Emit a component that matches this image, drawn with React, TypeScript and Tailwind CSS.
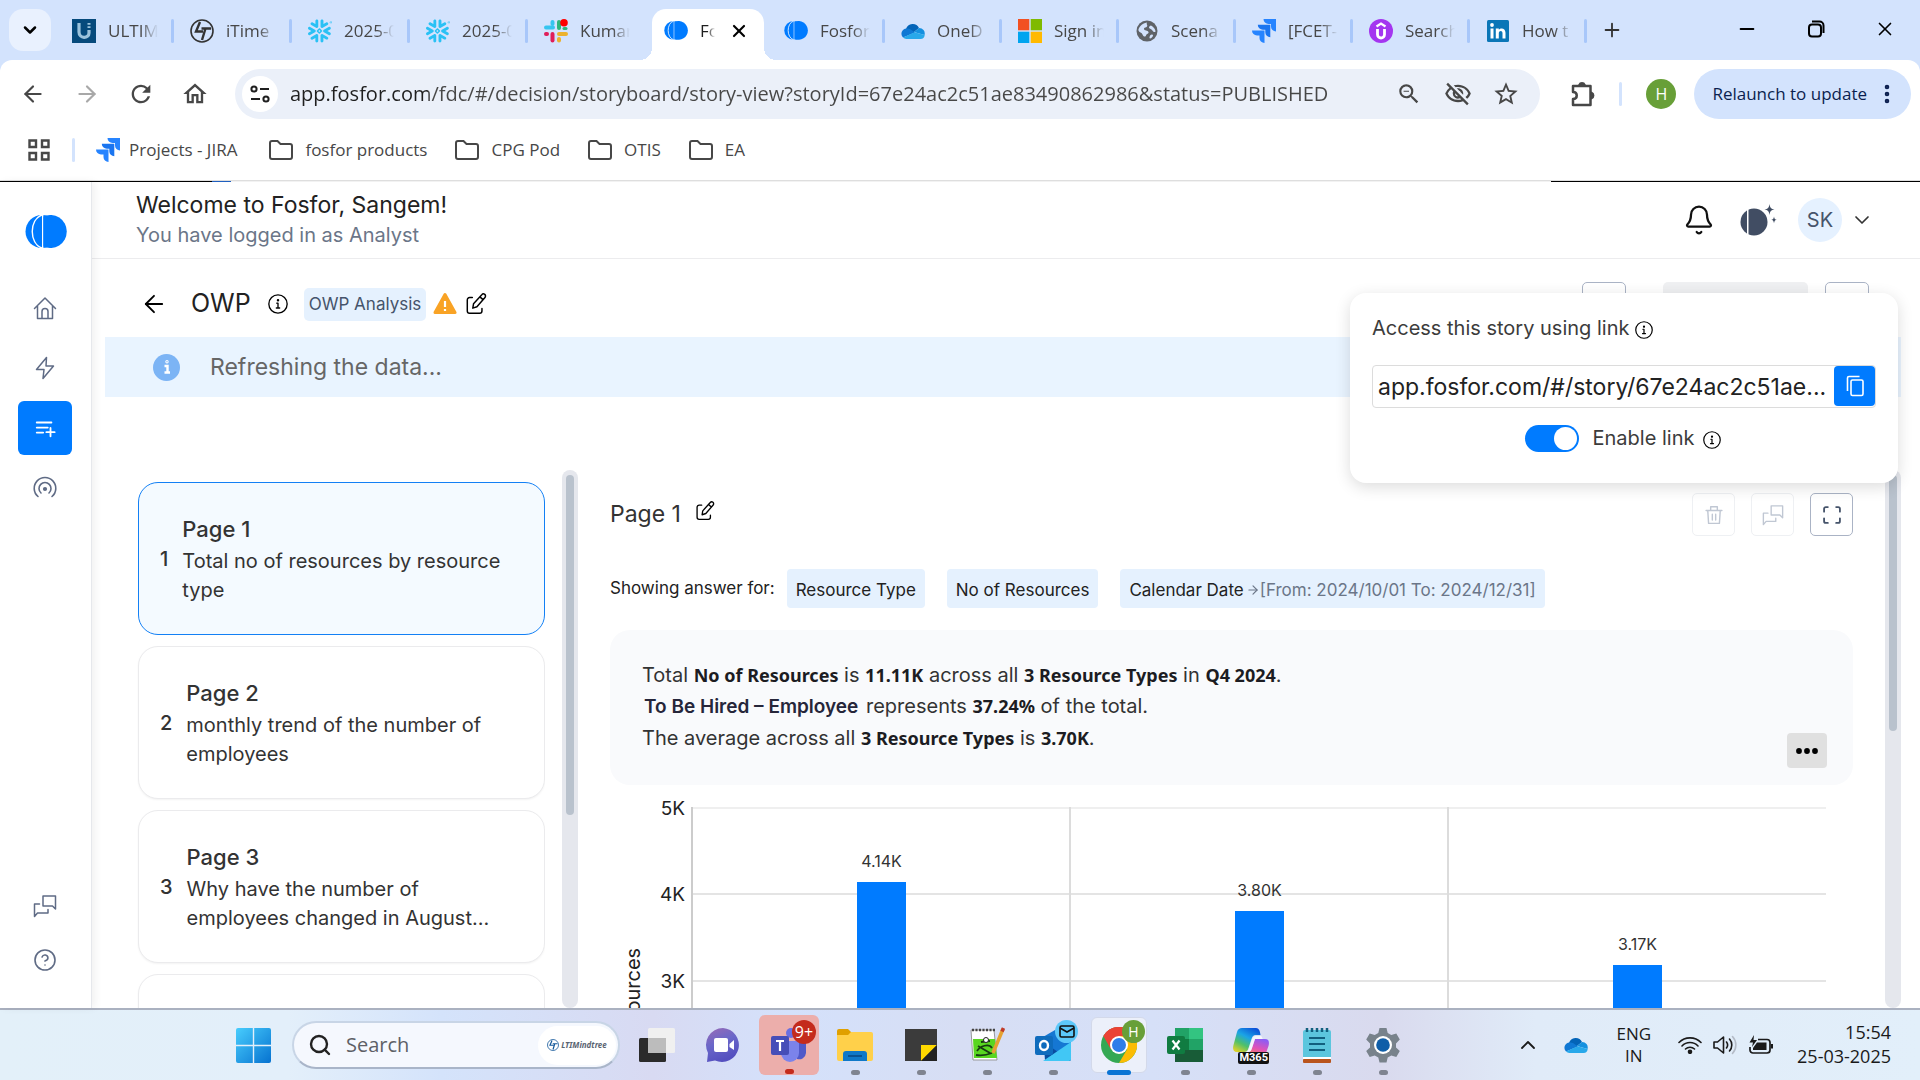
import React from "react";
import {
  ArrowLeft,
  ArrowRight,
  Bell,
  ChevronDown,
  ChevronUp,
  CircleHelp,
  Minus,
  MoreVertical,
  Plus,
  Search,
  X,
} from "lucide-react";
import {
  MdOutlineHome,
  MdOutlineStarBorder,
  MdOutlineVisibilityOff,
  MdOutlineZoomOut,
  MdRefresh,
} from "react-icons/md";
import { SiSnowflake } from "react-icons/si";

type IconProps = { className?: string };

/* ---------- brand icons ---------- */

const FosforLogo = ({ className }: IconProps) => (
  <svg viewBox="0 0 42 33" className={className}>
    <ellipse cx="17" cy="16.500" rx="16.500" ry="16.500" fill="#007bff" />
    <path d="M17 0C4 4 4 29 17 33" fill="none" stroke="#fff" strokeWidth="1.400" />
    <rect x="17" y="0" width="1.400" height="33" fill="#fff" />
    <path d="M18.400 1.500a16.500 16.500 0 1 1 0 30z" fill="#007bff" />
  </svg>
);

const JiraIcon = ({ className }: IconProps) => (
  <svg viewBox="0 0 24 24" className={className}>
    <path d="M11.500 0H24v12.500a5 5 0 0 1-5-5V5h-2.500a5 5 0 0 1-5-5z" fill="#2684ff" />
    <path d="M5.800 5.800h12.500v12.500a5 5 0 0 1-5-5v-2.500h-2.500a5 5 0 0 1-5-5z" fill="#1a75f0" />
    <path d="M0 11.500h12.500V24a5 5 0 0 1-5-5v-2.500H5a5 5 0 0 1-5-5z" fill="#2684ff" />
  </svg>
);

const UltimIcon = () => (
  <svg viewBox="0 0 24 24" className="size-6">
    <rect width="24" height="24" fill="#064a7c" />
    <path d="M7 4v9c0 7 10 7 10 1v-3" fill="none" stroke="#9cc3dc" strokeWidth="3.200" />
    <path d="M15.500 4h3v1.800h-3zM15.500 7.300h3v1.800h-3z" fill="#9cc3dc" />
  </svg>
);

const LtIcon = ({ className, color = "#333" }: IconProps & { color?: string }) => (
  <svg viewBox="0 0 24 24" className={className} fill="none" stroke={color}>
    <circle cx="12" cy="12" r="11" strokeWidth="1.600" />
    <path d="M10 3 6 12.500h7M21 9.500h-9.500M15.500 9.500 12 21" strokeWidth="2.400" />
  </svg>
);

const SlackIcon = () => (
  <svg viewBox="0 0 24 24" className="size-6">
    <rect x="0" y="6.500" width="11" height="4" rx="2" fill="#36c5f0" />
    <rect x="6.500" y="1" width="4" height="6" rx="2" fill="#36c5f0" />
    <rect x="13" y="1" width="4" height="10" rx="2" fill="#2eb67d" />
    <rect x="18.500" y="8" width="5" height="3" rx="1.500" fill="#2eb67d" />
    <rect x="13" y="13" width="11" height="4" rx="2" fill="#ecb22e" />
    <rect x="13" y="18" width="4" height="5.500" rx="2" fill="#ecb22e" />
    <rect x="6.500" y="13" width="4" height="10.500" rx="2" fill="#e01e5a" />
    <rect x="0" y="13" width="5" height="4" rx="2" fill="#e01e5a" />
    <circle cx="20" cy="3.800" r="3.800" fill="#ff0000" />
  </svg>
);

const OneDriveIcon = () => (
  <svg viewBox="0 0 24 16" className="w-6">
    <path d="M5 6a7 7 0 0 1 13-1l-5 4-8 2z" fill="#0364b8" />
    <path d="M5.500 5.500A5.300 5.300 0 0 0 2 14.500L14 9.500 9 6a6 6 0 0 0-3.500-.5z" fill="#0f78d4" />
    <path d="M13 9l5-4a5.500 5.500 0 0 1 5.500 7z" fill="#1490df" />
    <path d="M2 14.500 13.500 9.300 23.700 12A4.500 4.500 0 0 1 19.500 16H5.300A5 5 0 0 1 2 14.500z" fill="#28a8ea" />
  </svg>
);

const MicrosoftIcon = () => (
  <svg viewBox="0 0 24 24" className="size-6">
    <path d="M0 0h11.300v11.300H0z" fill="#f25022" />
    <path d="M12.700 0H24v11.300H12.700z" fill="#7fba00" />
    <path d="M0 12.700h11.300V24H0z" fill="#00a4ef" />
    <path d="M12.700 12.700H24V24H12.700z" fill="#ffb900" />
  </svg>
);

const GlobeIcon = () => (
  <svg viewBox="0 0 24 24" className="size-6">
    <circle cx="12" cy="12" r="10.500" fill="#5f6368" />
    <path d="M12 3.500c-1 2 1 2.500 0 4s-3 .5-3 2.500 4 1 4.500 3-2 1.500-2.500 3.500-3 1-3.500-1S4 13.500 3.500 11.500 6.500 4 12 3.500z" fill="#d3e3fd" />
    <path d="M16 6.500c2 1 4.500 3.500 4.500 6-1 1.500-2.500 0-3.500-1.500s-3-1-3-2.500 1-1.500 2-2zM15.500 16c1-1 2.500-.5 2.500.5s-2 3-3 3-.5-2.500.5-3.500z" fill="#d3e3fd" />
  </svg>
);

const UdemyIcon = () => (
  <svg viewBox="0 0 24 24" className="size-6">
    <circle cx="12" cy="12" r="12" fill="#a435f0" />
    <path d="M7.500 7.500 12 4.500l4.500 3" fill="none" stroke="#fff" strokeWidth="2.200" />
    <path d="M8.500 10v5.500a3.500 3.500 0 0 0 7 0V10" fill="none" stroke="#fff" strokeWidth="2.800" />
  </svg>
);

const LinkedInIcon = () => (
  <svg viewBox="0 0 24 24" className="size-6">
    <rect x="1" y="1" width="22" height="22" rx="1.500" fill="#0a76b7" />
    <rect x="4.500" y="9.500" width="3" height="10" fill="#fff" />
    <circle cx="6" cy="6" r="1.900" fill="#fff" />
    <path d="M9.800 9.500h3v1.300c2-2.500 6.700-1.700 6.700 3v5.700h-3v-5.300c0-3.200-3.700-2.800-3.700 0v5.300h-3z" fill="#fff" />
  </svg>
);

/* ---------- line icons ---------- */

const Line = ({ className, children, w = 1.5 }: IconProps & { children: React.ReactNode; w?: number }) => (
  <svg viewBox="0 0 24 24" className={className} fill="none" stroke="currentColor" strokeWidth={w} strokeLinecap="round" strokeLinejoin="round">
    {children}
  </svg>
);

const InfoIcon = ({ className }: IconProps) => (
  <Line className={className} w={1.6}>
    <circle cx="12" cy="12" r="11" />
    <path d="M10.500 11H12v5.500M10 16.800h4" />
    <circle cx="12" cy="7.500" r=".7" fill="currentColor" />
  </Line>
);

const EditIcon = ({ className }: IconProps) => (
  <Line className={className} w={1.6}>
    <path d="M8 5H5A2.500 2.500 0 0 0 2.500 7.500v12A2.500 2.500 0 0 0 5 22h11a2.500 2.500 0 0 0 2.500-2.500V17" />
    <path d="M8.500 16.500 9.300 11.800 18.300 1.800a2.300 2.300 0 0 1 3.500 3L13 15z M16.300 4.200l3.300 3" />
  </Line>
);

const ChatsIcon = ({ className }: IconProps) => (
  <Line className={className}>
    <path d="M10 2h12.500v13l-3-3H10z" />
    <path d="M6.500 10H1.500v12.500l3-3.500H15v-3.500" />
  </Line>
);

const HouseIcon = ({ className }: IconProps) => (
  <Line className={className}>
    <path d="M1.500 12.500 12 2l10.500 10.500M4.500 10v12.500h15V10" />
    <path d="M9 22v-6.500a3 3 0 0 1 6 0V22" />
  </Line>
);

const BoltIcon = ({ className }: IconProps) => (
  <Line className={className}>
    <path d="M13.500 1.500 3.500 13.500H11L10 22.500 20.500 10H13z" />
  </Line>
);

const BroadcastIcon = ({ className }: IconProps) => (
  <Line className={className} w={1.6}>
    <path d="M5 20.500a10.800 10.800 0 1 1 14 0" />
    <path d="M8 17a6 6 0 1 1 8 0" />
    <circle cx="12" cy="13" r="1.300" fill="currentColor" />
  </Line>
);

const StoryIcon = ({ className }: IconProps) => (
  <Line className={className} w={2}>
    <path d="M3 6h16M3 11.500h12M3 17h7M18 12v9M13.500 16.500h9" />
  </Line>
);

const TrashIcon = ({ className }: IconProps) => (
  <Line className={className} w={1.7}>
    <path d="M2.500 6.500h19M8 6V2h8v4M4.500 6.500l1 15.500h13l1-15.500M10 11v7M14 11v7" />
  </Line>
);

const FullscreenIcon = ({ className }: IconProps) => (
  <Line className={className} w={2.2}>
    <path d="M2.500 8V4.500a2 2 0 0 1 2-2H7M17 2.500h2.500a2 2 0 0 1 2 2V8M21.500 16v3.500a2 2 0 0 1-2 2H17M7 21.500H4.500a2 2 0 0 1-2-2V16" />
  </Line>
);

const FolderIcon = () => (
  <svg viewBox="0 0 24 20" className="w-6" fill="none" stroke="#474747" strokeWidth="2">
    <path d="M1 3a2 2 0 0 1 2-2h5.500l3 3H21a2 2 0 0 1 2 2v11a2 2 0 0 1-2 2H3a2 2 0 0 1-2-2z" />
  </svg>
);

/* ---------- browser chrome ---------- */

const tabs = [
  { label: "ULTIM", width: "w-[118px]", icon: <UltimIcon /> },
  { label: "iTime", width: "w-[118px]", icon: <LtIcon className="size-6" /> },
  { label: "2025-0", width: "w-[118px]", icon: <SiSnowflake className="size-6 text-[#29c1f5]" /> },
  { label: "2025-0", width: "w-[118px]", icon: <SiSnowflake className="size-6 text-[#29c1f5]" /> },
  { label: "Kumar", width: "w-[118px]", icon: <SlackIcon /> },
  { label: "Fo", width: "w-[122px]", icon: <FosforLogo className="w-6" />, active: true },
  { label: "Fosfor", width: "w-[117px]", icon: <FosforLogo className="w-6" /> },
  { label: "OneD", width: "w-[117px]", icon: <OneDriveIcon /> },
  { label: "Sign in", width: "w-[117px]", icon: <MicrosoftIcon /> },
  { label: "Scena", width: "w-[117px]", icon: <GlobeIcon /> },
  { label: "[FCET-", width: "w-[117px]", icon: <JiraIcon className="size-6" /> },
  { label: "Search", width: "w-[117px]", icon: <UdemyIcon /> },
  { label: "How t", width: "w-[117px]", icon: <LinkedInIcon /> },
];

function TabStrip() {
  return (
    <div className="flex h-[60px] shrink-0 items-end bg-[#d3e3fd]">
      <button aria-label="Search tabs" className="mb-[9px] ml-[9px] mr-[5px] grid h-[42px] w-[42px] shrink-0 place-items-center rounded-[14px] bg-[#e9f1fe]">
        <ChevronDown className="size-5" strokeWidth={3} />
      </button>
      {tabs.map((t, i) =>
        t.active ? (
          <div key={i} className={`${t.width} relative flex h-[51px] shrink pl-[6px] pr-1`}>
            <span className="absolute bottom-0 left-[-6px] size-3 bg-[radial-gradient(circle_at_0_0,transparent_12px,white_12px)]" />
            <span className="absolute bottom-0 right-[-8px] size-3 bg-[radial-gradient(circle_at_100%_0,transparent_12px,white_12px)]" />
            <div className="flex flex-1 items-center rounded-t-[14px] bg-white pb-2 pl-3">
              {t.icon}
              <span className="ml-3 w-[15px] overflow-hidden whitespace-nowrap text-[17px] text-[#1f1f1f] [mask-image:linear-gradient(to_right,black_50%,transparent)]">
                {t.label}
              </span>
              <button aria-label="Close tab" className="ml-[14px]">
                <X className="size-5" strokeWidth={2.6} />
              </button>
            </div>
          </div>
        ) : (
          <div key={i} className={`${t.width} flex h-[51px] shrink items-center pb-2 pl-4`}>
            <span className="shrink-0">{t.icon}</span>
            <span className="ml-3 w-[50px] overflow-hidden whitespace-nowrap text-[17px] text-[#474747] [mask-image:linear-gradient(to_right,black_65%,transparent)]">
              {t.label}
            </span>
            {i !== 4 && <span className="ml-auto h-6 w-[3px] shrink-0 rounded-sm bg-[#a8c7fa]" />}
          </div>
        )
      )}
      <button aria-label="New tab" className="mb-[19px] ml-[14px]">
        <Plus className="size-[22px] text-[#333]" />
      </button>
      <div className="mb-5 ml-auto mr-6 flex shrink-0 gap-[47px]">
        <button aria-label="Minimize"><Minus className="size-[22px]" /></button>
        <button aria-label="Restore">
          <svg viewBox="0 0 22 22" className="size-[22px]" fill="none" stroke="#000" strokeWidth="2">
            <rect x="4" y="6.500" width="12" height="12" rx="3" />
            <path d="M7 3.500h7.500a4 4 0 0 1 4 4V15" />
          </svg>
        </button>
        <button aria-label="Close"><X className="size-[22px]" strokeWidth={1.8} /></button>
      </div>
    </div>
  );
}

function Toolbar() {
  return (
    <div className="shrink-0 bg-[#d3e3fd]">
      <div className="rounded-t-xl bg-white pt-[9px]">
        <div className="flex h-[50px] items-center pl-5 pr-[9px] text-[#474747]">
          <button aria-label="Back"><ArrowLeft className="size-[26px]" /></button>
          <button aria-label="Forward" className="ml-7"><ArrowRight className="size-[26px] text-[#a8a8a8]" /></button>
          <button aria-label="Reload" className="ml-[27px]"><MdRefresh className="size-7" /></button>
          <button aria-label="Home" className="ml-[26px]"><MdOutlineHome className="size-7" /></button>
          <div className="ml-[26px] flex h-full flex-1 items-center rounded-full bg-[#ebf0f9] pl-[7px] pr-5">
            <button aria-label="Site information" className="grid size-9 place-items-center rounded-full bg-white">
              <svg viewBox="0 0 20 20" className="size-5" fill="none" stroke="#1f1f1f" strokeWidth="2">
                <circle cx="4" cy="5" r="2.600" />
                <path d="M10 5h9M1 15h9" />
                <circle cx="16" cy="15" r="2.600" />
              </svg>
            </button>
            <input
              aria-label="Address"
              readOnly
              value="app.fosfor.com/fdc/#/decision/storyboard/story-view?storyId=67e24ac2c51ae83490862986&status=PUBLISHED"
              className="ml-3 min-w-0 flex-1 bg-[linear-gradient(to_right,#1f1f1f_138px,#474747_138px)] bg-clip-text text-xl text-transparent outline-none"
            />
            <button aria-label="Zoom"><MdOutlineZoomOut className="size-[26px]" /></button>
            <button aria-label="Third-party cookies blocked" className="ml-[22px]"><MdOutlineVisibilityOff className="size-7" /></button>
            <button aria-label="Bookmark" className="ml-5"><MdOutlineStarBorder className="size-7" /></button>
          </div>
          <button aria-label="Extensions" className="ml-7">
            <svg viewBox="0 0 28 28" className="size-7" fill="none" stroke="#474747" strokeWidth="2.500">
              <path d="M5 6h17.500v19H5v-6c5 0 5-7 0-7z" strokeLinejoin="round" />
              <path d="M11.500 5a2.700 2.700 0 0 1 5 0zM23.500 13a2.700 2.700 0 0 1 0 5z" fill="#474747" />
            </svg>
          </button>
          <span className="ml-[23px] h-6 w-[3px] rounded bg-[#d3e3fd]" />
          <button aria-label="Profile" className="ml-6 grid size-[30px] place-items-center rounded-full bg-[#689f38] text-base text-white">H</button>
          <button className="ml-[18px] flex h-full items-center whitespace-nowrap rounded-full bg-[#d3e3fd] pl-[18px] pr-3 text-[17px] text-[#0b1f4f]">
            Relaunch to update
            <MoreVertical className="ml-2 size-6" strokeWidth={2.6} />
          </button>
        </div>
        <nav className="flex h-[61px] items-center pl-7 text-[17px] text-[#474747]">
          <button aria-label="Apps">
            <svg viewBox="0 0 22 22" className="size-[22px]" fill="none" stroke="#474747" strokeWidth="2.400">
              <path d="M1.500 1.500h6.500v6.500H1.500zM14 1.500h6.500v6.500H14zM1.500 14h6.500v6.500H1.500zM14 14h6.500v6.500H14z" />
            </svg>
          </button>
          <span className="ml-[22px] mr-[21px] h-6 w-[3px] rounded bg-[#d3e3fd]" />
          <a href="#jira" className="mr-1 flex items-center gap-[9px]"><JiraIcon className="size-6" />Projects - JIRA</a>
          {["fosfor products", "CPG Pod", "OTIS", "EA"].map((f) => (
            <a key={f} href="#folder" className="ml-[28px] flex items-center gap-3"><FolderIcon />{f}</a>
          ))}
        </nav>
      </div>
    </div>
  );
}

/* ---------- application ---------- */

function Sidebar() {
  return (
    <aside className="z-10 flex w-[92px] shrink-0 flex-col items-center border-r border-[#e6e8ec] bg-white pb-[21px] pr-px pt-[33px] text-[#5f6b85] shadow-[3px_0_8px_rgba(0,0,0,0.06)]">
      <a href="#home" aria-label="Fosfor" className="ml-[2px]"><FosforLogo className="w-[42px]" /></a>
      <nav className="mt-[33px] flex flex-col gap-[6px]">
        <button aria-label="Home" className="grid size-[54px] place-items-center"><HouseIcon className="size-6" /></button>
        <button aria-label="Insights" className="grid size-[54px] place-items-center"><BoltIcon className="size-6" /></button>
        <button aria-label="Stories" className="grid size-[54px] place-items-center rounded-md bg-[#007bff] text-white"><StoryIcon className="size-[22px]" /></button>
        <button aria-label="Broadcast" className="grid size-[54px] place-items-center"><BroadcastIcon className="size-6" /></button>
      </nav>
      <button aria-label="Chats" className="mt-auto grid size-[54px] place-items-center"><ChatsIcon className="size-6" /></button>
      <button aria-label="Help" className="grid size-[54px] place-items-center"><CircleHelp className="size-6" strokeWidth={1.6} /></button>
    </aside>
  );
}

function Header() {
  return (
    <header className="flex h-[77px] shrink-0 items-center border-b border-[#ececee] pl-11 pr-[46px]">
      <div>
        <h1 className="text-[23px] leading-[30px] text-[#222]">Welcome to Fosfor, Sangem!</h1>
        <p className="text-[20px] leading-[30px] text-[#6b7688]">You have logged in as Analyst</p>
      </div>
      <button aria-label="Notifications" className="ml-auto"><Bell className="size-8 text-[#111]" strokeWidth={1.7} /></button>
      <button aria-label="Assistant" className="ml-[25px]">
        <svg viewBox="0 0 37 32" className="h-8 w-[37px]" fill="#414d63">
          <circle cx="14" cy="18" r="13.500" />
          <rect x="7" y="4" width="1.500" height="28" fill="#fff" />
          <path d="M29.500 0c.6 4 1.500 5 5 5.500-3.500.6-4.400 1.500-5 5.500-.6-4-1.500-4.900-5-5.500 3.500-.5 4.400-1.500 5-5.500z" />
          <path d="M34 12.500c.4 2.500 1 3 2.800 3.300-1.800.4-2.400 1-2.800 3.400-.4-2.400-1-3-2.800-3.400 1.800-.3 2.400-.8 2.800-3.300z" />
        </svg>
      </button>
      <button className="ml-[21px] grid size-11 place-items-center rounded-full bg-[#e5f1ff] text-[20px] text-[#46546b]">SK</button>
      <button aria-label="Account menu" className="ml-2"><ChevronDown className="size-6 text-[#333]" strokeWidth={1.7} /></button>
    </header>
  );
}

const pages = [
  { title: "Page 1", text: "Total no of resources by resource type", active: true },
  { title: "Page 2", text: "monthly trend of the number of employees" },
  { title: "Page 3", text: "Why have the number of employees changed in August..." },
  { title: "", text: "" },
];

function PageList() {
  return (
    <div className="flex w-[440px] shrink-0 flex-col gap-[11px] overflow-hidden pl-[33px] pt-3">
      {pages.map((p, i) => (
        <button
          key={i}
          aria-label={`Open page ${i + 1}`}
          className={
            p.active
              ? "flex h-[153px] shrink-0 items-center gap-[14px] rounded-[20px] border border-[#1380f5] bg-[#f4faff] pl-[21px] pr-10 text-left text-[20px] text-[#333]"
              : "flex h-[153px] shrink-0 items-center gap-[14px] rounded-[20px] border border-[#ebebed] bg-white pl-[21px] pr-10 text-left text-[20px] text-[#333] shadow-[0_1px_2px_rgba(0,0,0,0.05)]"
          }
        >
          {p.title && (
            <>
              <span className="font-medium">{i + 1}</span>
              <span className="leading-[29px]">
                <span className="block pb-[2px] text-[22px] font-medium leading-8">{p.title}</span>
                {p.text}
              </span>
            </>
          )}
        </button>
      ))}
    </div>
  );
}

const bars = [
  { label: "4.14K", x: "calc(82px + (100% - 109px) * 0.16667)", top: 97 },
  { label: "3.80K", x: "calc(82px + (100% - 109px) * 0.5)", top: 126 },
  { label: "3.17K", x: "calc(82px + (100% - 109px) * 0.83333)", top: 180 },
];

function Chart() {
  return (
    <svg className="block min-h-0 w-full flex-1 font-[Inter]" role="img" aria-label="No of Resources by resource type">
      {[{ k: "5K", y: 23 }, { k: "4K", y: 109 }, { k: "3K", y: 196 }].map((g, i) => (
        <g key={g.k}>
          <svg x="82" y={g.y - 1} height="2" style={{ width: "calc(100% - 109px)" }}>
            <rect width="100%" height="2" fill={i ? "#e4e4e4" : "#efefef"} />
          </svg>
          <text x="75" y={g.y + 7} textAnchor="end" fontSize="19" fill="#222">{g.k}</text>
        </g>
      ))}
      <svg x="82" y="22" style={{ width: "calc(100% - 109px)" }} height="400" overflow="visible">
        <line x1="0" x2="0" y1="0" y2="400" stroke="#ccc" strokeWidth="2" />
        <line x1="33.333%" x2="33.333%" y1="0" y2="400" stroke="#dcdcdc" strokeWidth="2" />
        <line x1="66.667%" x2="66.667%" y1="0" y2="400" stroke="#dcdcdc" strokeWidth="2" />
      </svg>
      {bars.map((b) => (
        <foreignObject key={b.label} x="0" y={b.top - 30} width="100%" height="400">
          <div className="flex w-[49px] flex-col items-center" style={{ marginLeft: `calc(${b.x} - 24px)` }}>
            <span className="whitespace-nowrap text-[16px] leading-[18px] text-[#333]">{b.label}</span>
            <span className="mt-3 h-[360px] w-full bg-[#007bff]" />
          </div>
        </foreignObject>
      ))}
      <text transform="translate(30 320) rotate(-90)" fontSize="20" fill="#222">No of Resources</text>
    </svg>
  );
}

const B = ({ children }: { children: React.ReactNode }) => (
  <b className="font-['Noto_Sans'] text-[18px] font-bold text-[#1c1c22]">{children}</b>
);

function StoryPanel() {
  return (
    <section className="flex min-w-0 flex-1 flex-col overflow-hidden pl-8 pr-8 pt-[23px]">
      <div className="flex h-[43px] shrink-0 items-center">
        <h2 className="pb-[2px] text-[23px] leading-8 text-[#333]">Page 1</h2>
        <button aria-label="Rename page" className="mb-2 ml-[14px]"><EditIcon className="size-5" /></button>
        <div className="ml-auto flex gap-4">
          <button aria-label="Delete" className="grid size-[43px] place-items-center rounded-[5px] border border-[#eef0f3] text-[#c0c7d3]"><TrashIcon className="size-5" /></button>
          <button aria-label="Comments" className="grid size-[43px] place-items-center rounded-[5px] border border-[#eef0f3] text-[#c0c7d3]"><ChatsIcon className="size-[22px]" /></button>
          <button aria-label="Full screen" className="grid size-[43px] place-items-center rounded-[5px] border border-[#aab3c5] text-[#46546b]"><FullscreenIcon className="size-5" /></button>
        </div>
      </div>
      <div className="mt-[33px] flex h-[39px] shrink-0 items-center whitespace-nowrap text-[17px] text-[#222]">
        <span className="mr-3">Showing answer for:</span>
        <div className="flex gap-[22px]">
          <span className="rounded-[4px] bg-[#e5f1fe] px-[9px] pb-[6px] pt-[9px] leading-6">Resource Type</span>
          <span className="rounded-[4px] bg-[#e5f1fe] px-[9px] pb-[6px] pt-[9px] leading-6">No of Resources</span>
          <span className="flex items-center rounded-[4px] bg-[#e5f1fe] px-[9px] pb-[6px] pt-[9px] leading-6">
            Calendar Date
            <ArrowRight className="ml-[2px] size-[14px] text-[#6b7688]" />
            <span className="text-[#6b7688]">[From: 2024/10/01 To: 2024/12/31]</span>
          </span>
        </div>
      </div>
      <div className="mt-[22px] flex h-[155px] shrink-0 items-start rounded-[20px] bg-[#f9fafc] pl-8 pr-[26px] pt-[30px] text-[20px] leading-[30px] text-[#333]">
        <div>
          <p>Total <B>No of Resources</B> is <B>11.11K</B> across all <B>3 Resource Types</B> in <B>Q4 2024</B>.</p>
          <p className="py-px"><b className="ml-[2px] mr-[2px] text-[19px] font-semibold text-[#26263a]">To Be Hired – Employee</b> represents <B>37.24%</B> of the total.</p>
          <p>The average across all <B>3 Resource Types</B> is <B>3.70K</B>.</p>
        </div>
        <button aria-label="More" className="mb-[17px] ml-auto grid h-[35px] w-10 place-items-center self-end rounded-[4px] bg-[#e0e0e0]">
          <svg viewBox="0 0 24 6" className="w-6"><circle cx="4" cy="3" r="2.900" /><circle cx="12" cy="3" r="2.900" /><circle cx="20" cy="3" r="2.900" /></svg>
        </button>
      </div>
      <Chart />
    </section>
  );
}

function SharePopup() {
  return (
    <div className="absolute right-[22px] top-[34px] z-20 h-[190px] w-[548px] rounded-2xl bg-white px-[22px] pt-[21px] text-[20px] text-[#3c3c3c] shadow-[0_4px_16px_rgba(0,0,0,0.14)]">
      <div className="flex h-7 items-center whitespace-nowrap">
        <label htmlFor="story-link">Access this story using link</label>
        <InfoIcon className="ml-[6px] mt-1 size-[18px] text-black" />
      </div>
      <div className="mt-[23px] flex h-[43px] items-start rounded-[4px] border border-[#dcdcdc] pl-[5px]">
        <input
          id="story-link"
          readOnly
          value="app.fosfor.com/#/story/67e24ac2c51ae..."
          className="h-full min-w-0 flex-1 text-[23px] text-[#222] outline-none"
        />
        <button aria-label="Copy link" className="grid h-10 w-[41px] place-items-center rounded-[4px] bg-[#007bff]">
          <svg viewBox="0 0 20 22" className="h-[22px] w-5" fill="none" stroke="#fff" strokeWidth="1.600">
            <rect x="6" y="5" width="12" height="15.500" rx="1.500" />
            <path d="M2.500 16V3A1.500 1.500 0 0 1 4 1.500h10.500" />
          </svg>
        </button>
      </div>
      <div className="mt-[15px] flex items-center justify-center pr-[2px]">
        <label className="flex items-center whitespace-nowrap">
          <input type="checkbox" defaultChecked className="peer sr-only" />
          <span className="mr-[14px] flex h-[27px] w-[54px] items-center justify-end rounded-full bg-[#007bff] pr-[2px]">
            <span className="size-[23px] rounded-full bg-white" />
          </span>
          Enable link
        </label>
        <InfoIcon className="ml-[9px] mt-1 size-[18px] text-black" />
      </div>
    </div>
  );
}

function Workspace() {
  return (
    <main className="relative flex min-h-0 flex-1 flex-col pl-[13px] pr-[19px]">
      <div className="flex h-[78px] shrink-0 items-center pl-[35px] pr-8 pt-3">
        <button aria-label="Back"><ArrowLeft className="size-7" strokeWidth={1.6} /></button>
        <h2 className="ml-[23px] text-[25px] text-[#222]">OWP</h2>
        <InfoIcon className="ml-[17px] size-5" />
        <span className="ml-4 rounded-[5px] bg-[#e5f1fe] px-[5px] text-[17px] leading-[33px] text-[#46546b]">OWP Analysis</span>
        <svg viewBox="0 0 24 24" className="ml-[7px] size-6">
          <path d="M12 2.500 22 20.500H2z" fill="#f9a325" stroke="#f9a325" strokeWidth="3" strokeLinejoin="round" />
          <path d="M12 9v6M12 17v2" stroke="#fff" strokeWidth="2.200" />
        </svg>
        <button aria-label="Edit story" className="ml-2"><EditIcon className="size-[22px]" /></button>
        <div className="ml-auto flex">
          <button aria-label="Refresh" className="size-11 rounded-[5px] border border-[#aab3c5]" />
          <button aria-label="Publish" className="ml-[37px] h-11 w-[145px] rounded-[5px] bg-[#eff0f2]" />
          <button aria-label="Share" className="ml-[17px] size-11 rounded-[5px] border border-[#aab3c5]" />
        </div>
      </div>
      <div role="status" className="flex h-[60px] shrink-0 items-center bg-[#e9f4ff] pl-12 text-[23px] text-[#666]">
        <span className="mr-[30px] grid size-[27px] place-items-center rounded-full bg-[#7cb4f5]">
          <svg viewBox="0 0 12 16" className="h-4" fill="none" stroke="#fff" strokeWidth="2.400"><path d="M3.500 7h3v6.500M3.500 13.500h5.500" /><circle cx="6" cy="2.800" r=".5" /></svg>
        </span>
        Refreshing the data...
      </div>
      <SharePopup />
      <div className="mt-[73px] flex min-h-0 flex-1">
        <PageList />
        <div className="ml-[17px] w-4 shrink-0 rounded-full bg-[#e5e7ed] px-1 pt-[5px]"><div className="h-[340px] rounded-full bg-[#b9c2cd]" /></div>
        <StoryPanel />
        <div className="w-4 shrink-0 rounded-full bg-[#e5e7ed] px-1 pt-[5px]"><div className="h-[256px] rounded-full bg-[#b9c2cd]" /></div>
      </div>
    </main>
  );
}

/* ---------- taskbar ---------- */

const TeamsIcon = () => (
  <svg viewBox="0 0 36 36" className="size-9">
    <circle cx="20" cy="6" r="5" fill="#6a6fe0" /><circle cx="30" cy="10" r="4" fill="#5059c9" />
    <path d="M24 14h11v12a7 7 0 0 1-9 6z" fill="#5059c9" />
    <path d="M10 14h18v12a9 9 0 0 1-18 0z" fill="#7b83eb" />
    <rect x="0" y="9" width="18" height="19" rx="2" fill="#464eb8" />
    <path d="M5 14h8M9 14v10" stroke="#fff" strokeWidth="2.200" />
  </svg>
);
const ExplorerIcon = () => (
  <svg viewBox="0 0 36 36" className="size-9">
    <path d="M0 4a2 2 0 0 1 2-2h9l4 4-3 5H0z" fill="#e0a000" />
    <path d="M0 8h11l3-3h20a2 2 0 0 1 2 2v25a2 2 0 0 1-2 2H2a2 2 0 0 1-2-2z" fill="#ffd04a" />
    <path d="M6 34v-7a3 3 0 0 1 3-3h18a3 3 0 0 1 3 3v7z" fill="#0f78c8" />
    <path d="M11 29h14" stroke="#0a4f8c" strokeWidth="1.800" />
  </svg>
);
const StickyIcon = () => (
  <svg viewBox="0 0 36 36" className="size-9">
    <path d="M2 2h32v32H2z" fill="#3b3b3b" /><path d="M18 18h16L18 34z" fill="#ffd900" /><path d="M34 18v16H18z" fill="#222" />
  </svg>
);
const NotepadPlusIcon = () => (
  <svg viewBox="0 0 36 36" className="size-9">
    <path d="M2 3h23l3 30H4z" fill="#fff" stroke="#999" />
    <path d="M4 12h22l2 19H5z" fill="#59d620" />
    <path d="M3 3h23" stroke="#444" strokeWidth="2.500" strokeDasharray="2 1.500" />
    <path d="M8 24c3-5 12-8 15-3M9 19l12 7M12 15l9-1M7 28c6 1 11 0 16-2" stroke="#173b12" strokeWidth="1.800" fill="none" />
    <circle cx="17" cy="13" r="2.500" fill="#fff" stroke="#222" />
    <path d="M34 2 24 26" stroke="#e5a232" strokeWidth="3.500" /><path d="m34.500 1-1.500 3.500" stroke="#c03a2a" strokeWidth="3.500" />
  </svg>
);
const OutlookIcon = () => (
  <svg viewBox="0 0 36 36" className="size-9">
    <path d="M8 10 20 3l16 10v18a3 3 0 0 1-3 3H10z" fill="#1577d3" />
    <path d="M10 16 36 34H10z" fill="#0a4ea0" /><path d="M36 15v17a2 2 0 0 1-2 2H8z" fill="#41c7f5" />
    <rect x="0" y="9" width="18" height="19" rx="2" fill="#0f6cbd" />
    <ellipse cx="9" cy="18.500" rx="4" ry="4.500" fill="none" stroke="#fff" strokeWidth="2.400" />
  </svg>
);
const ChromeIcon = () => (
  <svg viewBox="0 0 36 36" className="size-9">
    <circle cx="18" cy="18" r="18" fill="#34a853" />
    <path d="M18 18 2.400 9A18 18 0 0 1 33.600 9H18z" fill="#ea4335" />
    <path d="M18 9h15.600A18 18 0 0 1 18 36l8-13.500z" fill="#fbbc04" />
    <path d="M2.400 9A18 18 0 0 1 18 0a18 18 0 0 1 15.600 9H18l-8 13.500z" fill="#ea4335" />
    <circle cx="18" cy="18" r="9" fill="#fff" /><circle cx="18" cy="18" r="7" fill="#2f7de9" />
  </svg>
);
const ExcelIcon = () => (
  <svg viewBox="0 0 36 36" className="size-9">
    <path d="M8 1h28v34H8z" fill="#21a366" /><path d="M22 1h14v11H22z" fill="#33c481" /><path d="M8 12h14v11H8z" fill="#107c41" /><path d="M8 23h28v12H8z" fill="#185c37" />
    <rect x="0" y="9" width="18" height="18" rx="2" fill="#107c41" />
    <path d="m5.500 13.500 7 9M12.500 13.500l-7 9" stroke="#fff" strokeWidth="2.200" />
  </svg>
);
const M365Icon = () => (
  <svg viewBox="0 0 36 36" className="size-9">
    <defs>
      <linearGradient id="m365-left" x1="0.800" y1="0" x2="0.200" y2="1">
        <stop offset="0" stopColor="#0b4fd8" /><stop offset=".4" stopColor="#1ba4e6" /><stop offset=".7" stopColor="#4fc06a" /><stop offset="1" stopColor="#d9d02c" />
      </linearGradient>
      <linearGradient id="m365-right" x1="0.700" y1="0" x2="0.300" y2="1">
        <stop offset="0" stopColor="#8b5cf6" /><stop offset=".5" stopColor="#e053b8" /><stop offset="1" stopColor="#ff8a4c" />
      </linearGradient>
    </defs>
    <path d="M22 12h10c4 0 4.500 3 3.500 7l-2.500 7c-1 3-2.500 4-5 4H16c-2 0-3-1.500-4-5h3c2 0 3-1 4-4z" fill="url(#m365-right)" />
    <path d="M9 1h14c3 0 4 3 4.500 7h-5c-2 0-3 1-4 4l-3 9c-1 3-2 4-4.500 4H4c-4 0-4.500-3-3.500-7L4 5c1-3 2.500-4 5-4z" fill="url(#m365-left)" />
    <path d="M22.500 9H28c1 0 1 3 2 3h-8l-3 9c-1 3-2 4-4 4h-3c2 0 3-1 4-4l3-9c1-2 2-3 3.500-3z" fill="#fff" opacity=".75" />
  </svg>
);
const NotepadIcon = () => (
  <svg viewBox="0 0 36 36" className="size-9">
    <rect x="4" y="3" width="28" height="30" rx="2" fill="#5cc6de" /><rect x="4" y="30" width="28" height="2" fill="#fff" /><rect x="4" y="32" width="28" height="4" rx="1" fill="#b9541d" />
    <path d="M8 1v4M13 1v4M18 1v4M23 1v4M28 1v4" stroke="#12607f" strokeWidth="2.500" />
    <path d="M10 11h16M10 17h16M10 23h16" stroke="#12607f" strokeWidth="1.800" />
  </svg>
);
const SettingsIcon = () => (
  <svg viewBox="0 0 36 36" className="size-9">
    <path d="M14.500 1h7l1.200 5 3.600 2 5-1.500 3.500 6L31 16.500v4L34.800 24l-3.500 6-5-1.500-3.600 2-1.200 5h-7l-1.200-5-3.600-2-5 1.500-3.500-6L5 20.500v-4L1.200 12.500l3.500-6 5 1.500 3.600-2z" fill="#78828b" strokeLinejoin="round" />
    <circle cx="18" cy="18" r="9" fill="#fff" /><circle cx="18" cy="18" r="6.800" fill="#0f5ea8" />
  </svg>
);

const apps = [
  { name: "File Explorer", icon: <ExplorerIcon /> },
  { name: "Sticky Notes", icon: <StickyIcon /> },
  { name: "Notepad++", icon: <NotepadPlusIcon /> },
  { name: "Outlook", icon: <OutlookIcon /> },
  { name: "Chrome", icon: <ChromeIcon /> },
  { name: "Excel", icon: <ExcelIcon /> },
  { name: "Microsoft 365", icon: <M365Icon /> },
  { name: "Notepad", icon: <NotepadIcon /> },
  { name: "Settings", icon: <SettingsIcon /> },
];

function Taskbar() {
  return (
    <footer className="flex h-[72px] shrink-0 items-center border-t-2 border-[#aab1c0] bg-[linear-gradient(to_right,#e3f0f9_0%,#e3effa_15%,#d4e3fb_23%,#d8daf2_34%,#d4e1fb_41%,#d7def4_50%,#d6e0f8_60%,#d9daee_72%,#e0ebf8_80%,#e2effa_100%)] pl-[236px] pr-[29px] text-[#1a1a1a]">
      <button aria-label="Start" className="shrink-0">
        <svg viewBox="0 0 35 35" className="size-[35px]">
          <defs><linearGradient id="win" x1="0" y1="0" x2="1" y2="1" gradientUnits="objectBoundingBox"><stop offset="0" stopColor="#48cdfd" /><stop offset="1" stopColor="#0672d0" /></linearGradient></defs>
          <path d="M2 0h14.800v16.800H0V2a2 2 0 0 1 2-2zM18.200 0H33a2 2 0 0 1 2 2v14.800H18.200zM0 18.200h16.800V35H2a2 2 0 0 1-2-2zM18.200 18.200H35V33a2 2 0 0 1-2 2H18.200z" fill="url(#win)" />
        </svg>
      </button>
      <div className="ml-[21px] flex h-12 w-[328px] shrink-0 items-center rounded-full border-2 border-[#c8d5e6] border-b-[#a9b5c9] bg-[#f5f8fe] pl-[14px] pr-[2px]">
        <Search className="size-6 shrink-0 text-[#222]" strokeWidth={2.4} />
        <input aria-label="Search" placeholder="Search" className="ml-[14px] min-w-0 flex-1 text-[20px] outline-none placeholder:text-[#5d6066]" />
        <span className="flex h-[39px] w-[78px] items-center justify-center gap-[2px] rounded-full bg-white font-['Noto_Sans'] text-[8px] font-bold italic text-[#5a6472]">
          <LtIcon className="size-3" color="#14589a" />LTIMindtree
        </span>
      </div>
      <div className="ml-1 flex shrink-0 items-center">
        <button aria-label="Task view" className="grid w-[66px] place-items-center">
          <svg viewBox="0 0 36 36" className="size-9"><rect x="0" y="11" width="27" height="24" rx="1.500" fill="#2b2b2b" /><rect x="9" y="1" width="27" height="25" rx="1.500" fill="#f0f0f0" /><path d="M9 11h18v15H9z" fill="#bcbcbc" /></svg>
        </button>
        <button aria-label="Chat" className="grid w-[66px] place-items-center">
          <svg viewBox="0 0 36 36" className="size-9">
            <defs><linearGradient id="chat" x1="0" y1="0" x2=".4" y2="1"><stop offset="0" stopColor="#9a6ab5" /><stop offset=".5" stopColor="#6a67c9" /><stop offset="1" stopColor="#5550bf" /></linearGradient></defs>
            <path d="M18 1a17 17 0 1 1-8 32.500L2 35l1-9A17 17 0 0 1 18 1z" fill="url(#chat)" />
            <rect x="9" y="11" width="14" height="14" rx="2" fill="#fff" /><path d="m24.500 17 4.500-4v10l-4.500-3z" fill="#fff" />
          </svg>
        </button>
        <button aria-label="Teams" className="relative mx-[3px] grid h-[60px] w-[60px] place-items-center rounded-md bg-[#ecaeab]">
          <TeamsIcon />
          <span className="absolute right-[3px] top-[5px] grid size-6 place-items-center rounded-full bg-[#c42b1c] text-[16px] leading-none text-white">9+</span>
          <span className="absolute bottom-[1px] h-[5px] w-[9px] rounded-full bg-[#c42b1c]" />
        </button>
        {apps.map((a) => {
          const on = a.name === "Chrome";
          return (
            <button key={a.name} aria-label={a.name} className="relative grid h-[60px] w-[66px] place-items-center">
              {on && <span className="absolute inset-x-[5px] bottom-[2px] top-[2px] rounded-md border border-[#d3d9ea] bg-[#ecf0fa]" />}
              <span className="relative">{a.icon}</span>
              {on && <span className="absolute right-[7px] top-[5px] grid size-[23px] place-items-center rounded-full bg-[#689f38] text-[14px] text-white">H</span>}
              {a.name === "Outlook" && (
                <span className="absolute right-[8px] top-[5px] grid size-[23px] place-items-center rounded-full bg-[#5cc8fa]">
                  <svg viewBox="0 0 16 13" className="w-4" fill="none" stroke="#111" strokeWidth="1.600"><rect x="1" y="1" width="14" height="11" rx="1.500" /><path d="m1 3 7 4 7-4" /></svg>
                </span>
              )}
              {a.name === "Microsoft 365" && (
                <span className="absolute bottom-[11px] right-[15px] rounded-[2px] bg-[#111] px-[1px] font-[Roboto] text-[11px] font-bold leading-[12px] text-white">M365</span>
              )}
              <span className={on ? "absolute bottom-0 h-[5px] w-6 rounded-full bg-[#0a74d4]" : "absolute bottom-0 h-[5px] w-[9px] rounded-full bg-[#7f8490]"} />
            </button>
          );
        })}
      </div>
      <div className="ml-auto flex shrink-0 items-center">
        <button aria-label="Hidden icons"><ChevronUp className="size-6" strokeWidth={1.8} /></button>
        <button aria-label="OneDrive" className="ml-6"><OneDriveIcon /></button>
        <button className="ml-7 text-center text-[17px] leading-[22px]">ENG<br />IN</button>
        <button aria-label="Network" className="ml-[27px]">
          <svg viewBox="0 0 24 18" className="w-6" fill="none" stroke="currentColor" strokeWidth="1.600" strokeLinecap="round">
            <path d="M1 6.500a15.500 15.500 0 0 1 22 0M4 10a11 11 0 0 1 16 0M7.500 13a6.500 6.500 0 0 1 9 0" /><circle cx="12" cy="15.800" r="1.500" fill="currentColor" />
          </svg>
        </button>
        <button aria-label="Volume" className="ml-[11px]">
          <svg viewBox="0 0 24 20" className="w-6" fill="none" stroke="currentColor" strokeWidth="1.600" strokeLinecap="round" strokeLinejoin="round">
            <path d="M1 7v6h3.500l6 5V2l-6 5zM13.500 7a5 5 0 0 1 0 6M16.500 4a9 9 0 0 1 0 12" /><path d="M19.500 1.500a12.500 12.500 0 0 1 0 17" stroke="#b5bcc7" />
          </svg>
        </button>
        <button aria-label="Battery" className="ml-3">
          <svg viewBox="0 0 24 20" className="w-6" fill="none" stroke="currentColor" strokeWidth="1.700">
            <path d="M9 4.500h9a3 3 0 0 1 3 3V15a3 3 0 0 1-3 3H4a3 3 0 0 1-3-3v-3" /><path d="M8 7.500h9.500V15H4v-2z" fill="currentColor" stroke="none" /><path d="M5 0 .5 7.500H4L3 12l5-7H4.500z" fill="currentColor" stroke="none" /><path d="M23 9v4.500" strokeWidth="2.200" />
          </svg>
        </button>
        <button className="ml-6 pb-[2px] text-right text-[18px] leading-6">15:54<br />25-03-2025</button>
      </div>
    </footer>
  );
}

export default function App() {
  return (
    <div className="flex h-screen flex-col overflow-hidden bg-white font-['Open_Sans',sans-serif]">
      <TabStrip />
      <Toolbar />
      <div className="h-[2px] shrink-0 border-t border-[#dedede] bg-[linear-gradient(to_right,#000_0_212px,#1f5fc0_212px_231px,#f2f2f2_231px_calc(100%-369px),#000_calc(100%-369px))]" />
      <div className="flex min-h-0 flex-1 font-['Inter',sans-serif]">
        <Sidebar />
        <div className="flex min-w-0 flex-1 flex-col">
          <Header />
          <Workspace />
        </div>
      </div>
      <Taskbar />
    </div>
  );
}
